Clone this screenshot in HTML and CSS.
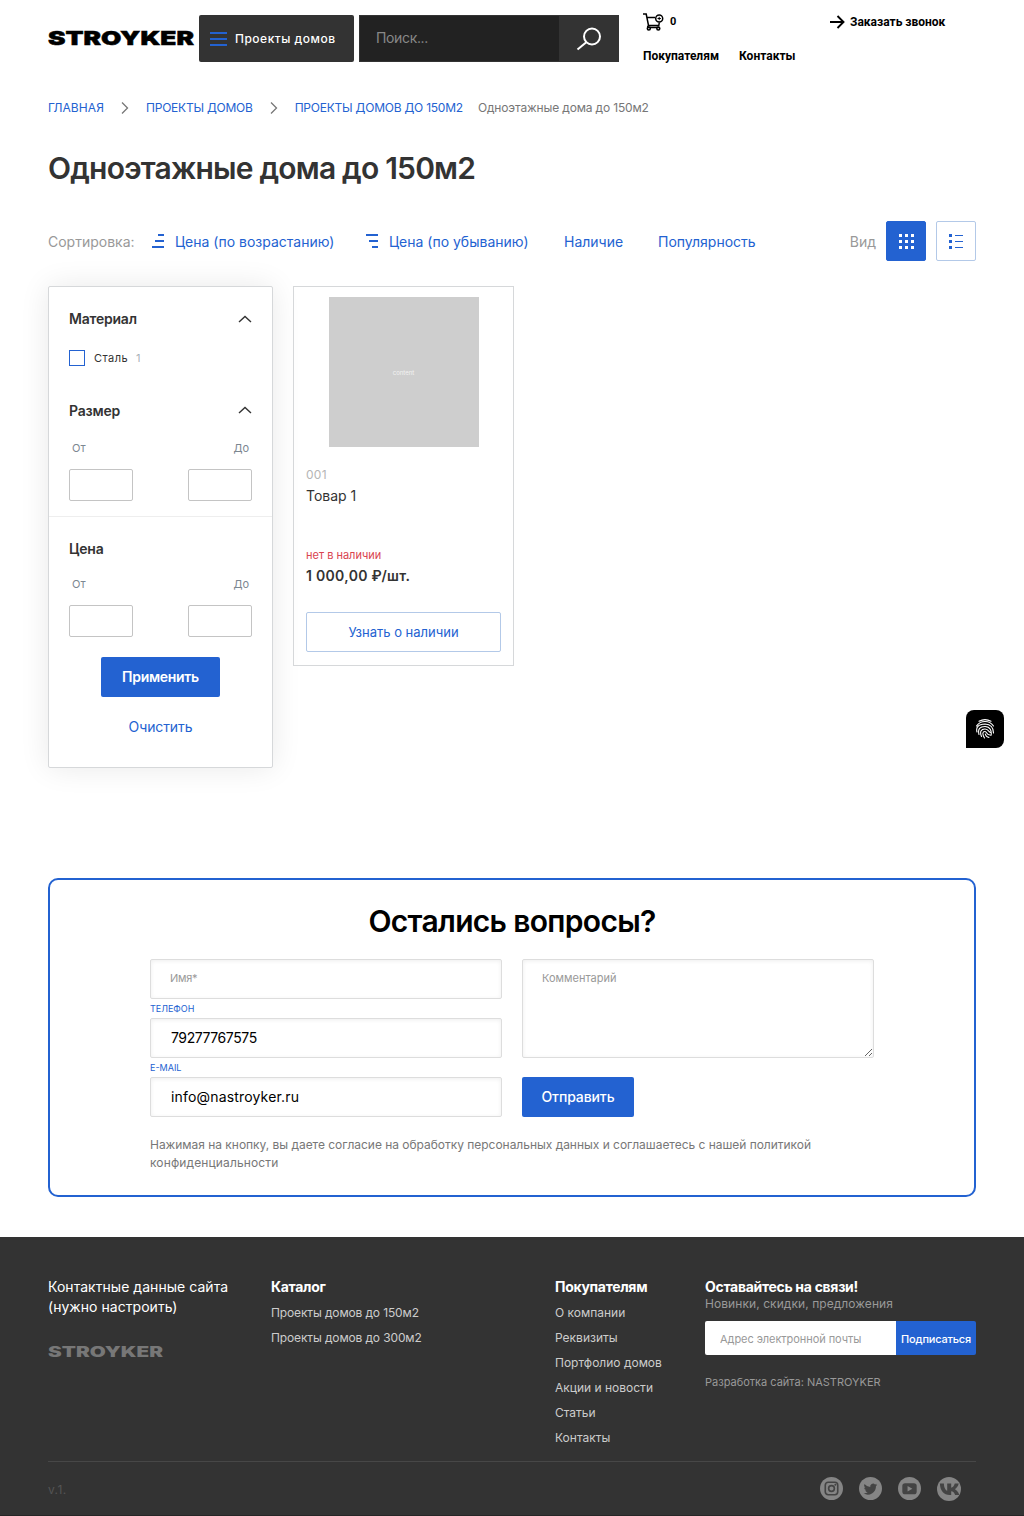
FILE: index.html
```html
<!DOCTYPE html>
<html lang="ru">
<head>
<meta charset="utf-8">
<title>Одноэтажные дома до 150м2</title>
<link rel="stylesheet" href="styles.css">
</head>
<body>
<header class="header">
  <a class="logo"><svg width="146" height="26" viewBox="0 0 146 26"><text x="0" y="19.500" textLength="146" lengthAdjust="spacingAndGlyphs">STROYKER</text></svg></a>
  <button class="menu-btn"><svg width="17" height="14" viewBox="0 0 17 14" stroke="#2362d1" stroke-width="2"><path d="M0 1h17M0 7h17M0 13h17"/></svg><span>Проекты домов</span></button>
  <div class="search"><input type="text" placeholder="Поиск..."><button class="search-btn"><svg width="26" height="24" viewBox="0 0 26 24" fill="none" stroke="#fff" stroke-width="2"><circle cx="16" cy="9.500" r="8"/><path d="M10.300 15.200L1.500 22.500"/></svg></button></div>
  <div class="top-nav">
    <div class="top-row">
      <a class="cart"><svg width="21" height="18" viewBox="0 0 21 18" fill="none" stroke="#000" stroke-width="1.500"><path d="M0 1h3.200L5.500 12.500H16.500M4 4.500H12M16.300 9.500L15.800 12.500M5.500 12.500Q3.800 14.300 5.500 14.500H16"/><circle cx="5.800" cy="15.500" r="1.500"/><circle cx="15.300" cy="15.500" r="1.500"/><circle cx="16.200" cy="5.500" r="3.500"/><path d="M16.200 3.800v3.400M14.500 5.500h3.400" stroke-width="1"/></svg><span>0</span></a>
      <a class="callback"><svg width="15" height="14" viewBox="0 0 15 14" fill="none" stroke="#000" stroke-width="1.900"><path d="M0 7h13.500M7.500 1l6 6-6 6"/></svg><span>Заказать звонок</span></a>
    </div>
    <nav class="top-links"><a>Покупателям</a><a>Контакты</a></nav>
  </div>
</header>
<main class="page">
  <nav class="crumbs">
    <a class="crumb-home">ГЛАВНАЯ</a><svg class="chev" width="8" height="12" viewBox="0 0 8 12"><path d="M1 .5L6.500 6 1 11.500"/></svg>
    <a>ПРОЕКТЫ ДОМОВ</a><svg class="chev" width="8" height="12" viewBox="0 0 8 12"><path d="M1 .5L6.500 6 1 11.500"/></svg>
    <a class="crumb-last">ПРОЕКТЫ ДОМОВ ДО 150М2</a><span>Одноэтажные дома до 150м2</span>
  </nav>
  <h1>Одноэтажные дома до 150м2</h1>
  <div class="sort">
    <span class="muted sort-label">Сортировка:</span>
    <a class="sort-asc"><svg width="12" height="14" viewBox="0 0 12 14"><path d="M6 1h6M3 7h9M0 13h12"/></svg><span>Цена (по возрастанию)</span></a>
    <a class="sort-desc"><svg width="12" height="14" viewBox="0 0 12 14"><path d="M0 1h12M3 7h9M6 13h6"/></svg><span>Цена (по убыванию)</span></a>
    <a class="sort-stock">Наличие</a>
    <a class="sort-pop">Популярность</a>
    <div class="view"><span class="muted">Вид</span>
      <button class="view-btn active"><svg width="15" height="15" viewBox="0 0 15 15" fill="#fff"><path d="M0 0h3v3H0zM6 0h3v3H6zM12 0h3v3h-3zM0 6h3v3H0zM6 6h3v3H6zM12 6h3v3h-3zM0 12h3v3H0zM6 12h3v3H6zM12 12h3v3h-3z"/></svg></button>
      <button class="view-btn"><svg width="15" height="15" viewBox="0 0 15 15" fill="#2362d1"><path d="M0 0h3v3H0zM0 6h3v3H0zM0 12h3v3H0zM6 1h8v1H6zM6 7h8v1H6zM6 13h8v1H6z"/></svg></button>
    </div>
  </div>
  <div class="catalog">
    <aside class="filter">
      <section class="filter-material">
        <h3><span>Материал</span><svg width="14" height="8" viewBox="0 0 14 8"><path d="M1 7l6-5.500L13 7"/></svg></h3>
        <label class="check"><span class="box"></span><span class="check-name">Сталь</span><i>1</i></label>
      </section>
      <section class="filter-size">
        <h3><span>Размер</span><svg width="14" height="8" viewBox="0 0 14 8"><path d="M1 7l6-5.500L13 7"/></svg></h3>
        <div class="range-labels"><span>От</span><span>До</span></div>
        <div class="range"><input type="text"><input type="text"></div>
      </section>
      <section class="filter-price">
        <h3><span>Цена</span></h3>
        <div class="range-labels"><span>От</span><span>До</span></div>
        <div class="range"><input type="text"><input type="text"></div>
        <button class="btn apply">Применить</button>
        <a class="clear">Очистить</a>
      </section>
    </aside>
    <article class="product">
      <div class="photo">content</div>
      <span class="sku">001</span>
      <a class="name">Товар 1</a>
      <span class="stock">нет в наличии</span>
      <b class="price">1 000,00 ₽/шт.</b>
      <button class="ask">Узнать о наличии</button>
    </article>
  </div>
  <section class="feedback">
    <h2>Остались вопросы?</h2>
    <form class="form">
      <div class="col">
        <input class="field ph name-field" type="text" placeholder="Имя*">
        <label>ТЕЛЕФОН</label>
        <input class="field phone" type="text" value="79277767575">
        <label>E-MAIL</label>
        <input class="field mail" type="text" value="info@nastroyker.ru">
      </div>
      <div class="col">
        <textarea class="field ph" placeholder="Комментарий"></textarea>
        <button type="button" class="btn send">Отправить</button>
      </div>
    </form>
    <p class="agree">Нажимая на кнопку, вы даете согласие на обработку персональных данных и соглашаетесь с нашей политикой<br><span>конфиденциальности</span></p>
  </section>
</main>
<footer class="footer">
  <div class="footer-cols">
    <div class="contacts"><p>Контактные данные сайта<br>(нужно настроить)</p>
      <svg width="115" height="20" viewBox="0 0 115 20"><text x="0" y="14.500" textLength="115" lengthAdjust="spacingAndGlyphs">STROYKER</text></svg></div>
    <div class="links"><h4>Каталог</h4><a class="tight">Проекты домов до 150м2</a><a class="tight">Проекты домов до 300м2</a></div>
    <div class="links"><h4>Покупателям</h4><a>О компании</a><a>Реквизиты</a><a>Портфолио домов</a><a>Акции и новости</a><a>Статьи</a><a>Контакты</a></div>
    <div class="subscribe"><h4>Оставайтесь на связи!</h4><p class="promo">Новинки, скидки, предложения</p>
      <div class="sub-form"><input type="text" placeholder="Адрес электронной почты"><button>Подписаться</button></div>
      <p class="dev">Разработка сайта: NASTROYKER</p></div>
  </div>
  <div class="footer-bottom"><span class="version">v.1.</span>
    <div class="social">
      <svg viewBox="0 0 24 24"><circle cx="12" cy="12" r="12"/><g class="cut"><rect x="5.500" y="5.500" width="13" height="13" rx="3"/><circle cx="12" cy="12" r="3"/></g><circle class="hole" cx="16" cy="8" r="1"/></svg>
      <svg viewBox="0 0 24 24"><circle cx="12" cy="12" r="12"/><path class="hole" d="M19 8.100a5.700 5.700 0 0 1-1.700.5 3 3 0 0 0 1.300-1.600 5.800 5.800 0 0 1-1.900.7A3 3 0 0 0 11.700 10.400 8.300 8.300 0 0 1 5.700 7.400a3 3 0 0 0 .9 3.900 3 3 0 0 1-1.300-.4 3 3 0 0 0 2.400 2.900 3 3 0 0 1-1.300.1 3 3 0 0 0 2.700 2A6 6 0 0 1 4.800 17a8.400 8.400 0 0 0 12.900-7.500A6 6 0 0 0 19 8.100z"/></svg>
      <svg viewBox="0 0 24 24"><circle cx="12" cy="12" r="12"/><rect class="hole" x="4.500" y="6.500" width="15" height="11.500" rx="3"/><path d="M10 9.500v5.500l5-2.750z"/></svg>
      <svg class="vk" viewBox="0 0 24 24"><circle cx="12" cy="12" r="12"/><path class="hole" d="M12.700 18C6.800 18 3.100 13.800 2.900 6.500h4c.1 5 2 6.800 3.300 7.300V6.500h4v4.300c1.500-.2 3-2.100 3.600-4.300h3.900c-.5 2.800-2.400 4.800-3.800 5.700 1.400.7 3.500 2.500 4.400 5.800h-4.200c-.7-2.200-2-3.500-3.900-3.700V18z"/></svg>
    </div>
  </div>
</footer>
<div class="finger"><svg width="20" height="22" viewBox="0 0 20 22"><path d="M4 3.200Q10 0 16 3.200M1.500 8Q4.500 3.500 10 3.500T18.500 8M2 14Q0 6.500 10 6Q18.500 6.500 18.500 15M4 16.500C2.500 11 5 8.500 10 8.500S17 13 16 17.500M6.500 18.500C4.500 14 6 11 10 11S14 15 16 14.500M9.500 20C7 16 7.500 13.500 10 13.500C12 13.500 11 17 15 17M10.300 16Q11 19 14 19.500"/></svg></div>
</body>
</html>
```
FILE: styles.css
```css
* { box-sizing: border-box; }
body { margin: 0; background: #fff; color: #333; font-family: Inter, "Noto Sans", sans-serif; font-size: 14px; }
a { color: #2362d1; text-decoration: none; }
button, input, textarea { font: inherit; margin: 0; padding: 0; outline: 0; border: 0; }
h1, h2, h3, h4, p { margin: 0; }
svg { display: block; flex: none; }

.header { display: flex; height: 95px; padding: 15px 48px 0; }
.logo { width: 151px; padding-top: 10px; }
.logo text { font-size: 19px; font-weight: 900; stroke: #000; stroke-width: .5; }
.logo svg, .contacts svg { overflow: visible; }
.menu-btn { display: flex; align-items: center; gap: 8px; width: 155px; height: 47px; margin-right: 5px; padding-left: 11px; border-radius: 2px; background: #333; color: #fff; font-size: 12px; font-weight: 500; letter-spacing: .5px; }
.search { display: flex; width: 260px; height: 47px; }
.search input { width: 200px; padding: 0 0 2px 16px; background: #222; border: 1px solid #333; border-right: 0; color: #fff; letter-spacing: -.35px; }
.search input::placeholder { color: #888; }
.search-btn { display: flex; align-items: center; justify-content: center; width: 60px; background: #333; }
.top-nav { flex: 1; padding-left: 24px; font-family: Roboto, sans-serif; font-size: 12px; font-weight: 700; color: #000; }
.top-nav a { color: #000; }
.top-row { display: flex; height: 14px; align-items: center; }
.cart { display: flex; width: 187px; gap: 6px; align-items: center; font-size: 11px; }
.cart span { margin-top: -2px; }
.callback { display: flex; gap: 5px; align-items: center; }
.top-links { display: flex; gap: 20px; margin-top: 20px; line-height: 14px; }

.page { padding: 0 48px; }
.crumbs { display: flex; align-items: center; height: 25px; font-size: 12px; letter-spacing: -.23px; color: #777; }
.crumb-home { letter-spacing: .1px; }
.chev { margin: 0 17px; fill: none; stroke: #777; stroke-width: 1.3; }
.crumb-last { margin-right: 15px; }
.crumbs span { letter-spacing: -.15px; }
h1 { margin-top: 29px; font-size: 30px; line-height: 38px; font-weight: 600; letter-spacing: -.8px; }
.sort { display: flex; align-items: center; height: 40px; margin-top: 34px; }
.muted { color: #999; }
.sort svg path { stroke: #2362d1; stroke-width: 2; }
.sort .view path { stroke: none; }
.sort-asc, .sort-desc { display: flex; align-items: center; gap: 11px; }
.sort-label { width: 104px; }
.sort-asc { width: 214px; }
.sort-desc { width: 198px; }
.sort-stock { width: 94px; }
.view { display: flex; align-items: center; gap: 10px; margin-left: auto; }
.view-btn { display: flex; align-items: center; justify-content: center; width: 40px; height: 40px; border: 1px solid #b3c9e8; border-radius: 2px; background: #fff; }
.view-btn.active { background: #2362d1; border-color: #2362d1; }

.catalog { display: flex; align-items: flex-start; gap: 20px; height: 617px; padding-top: 25px; }
.filter { width: 225px; height: 482px; border: 1px solid #d6d8da; border-radius: 2px; background: #fff; box-shadow: 0 0 30px rgba(0,0,0,.09); }
.filter section { padding: 0 20px; }
.filter h3 { display: flex; justify-content: space-between; align-items: center; height: 20px; font-size: 14px; font-weight: 600; letter-spacing: -.22px; }
.filter h3 path { fill: none; stroke: #333; stroke-width: 1.4; }
.filter .filter-material { height: 113px; padding-top: 22px; }
.filter-material h3 span { margin-top: -1px; }
.check { display: flex; align-items: center; height: 16px; margin-top: 21px; font-size: 11px; }
.check .box { width: 16px; height: 16px; border: 1px solid #2362d1; margin-right: 9px; }
.check-name { letter-spacing: .45px; }
.check i { margin-left: 8px; font-style: normal; color: #a9b1b8; }
.filter .filter-size { height: 117px; border-bottom: 1px solid #eee; }
.range-labels { display: flex; justify-content: space-between; height: 16px; margin-top: 20px; padding: 0 3px; font-size: 11px; line-height: 16px; color: #7c8791; }
.range { display: flex; justify-content: space-between; margin-top: 13px; }
.range input { width: 64px; height: 32px; border: 1px solid #c4c4c4; border-radius: 2px; }
.filter .filter-price { display: flex; flex-direction: column; padding-top: 21px; }
.filter-price .range-labels { margin-top: 18px; }
.btn { height: 40px; border-radius: 2px; background: #2362d1; color: #fff; font-weight: 600; }
.apply { width: 119px; margin: 20px auto 0; padding-bottom: 1px; align-self: center; letter-spacing: -.3px; }
.clear { align-self: center; margin-top: 20px; line-height: 20px; letter-spacing: -.1px; }

.product { display: flex; flex-direction: column; width: 221px; height: 380px; padding: 10px 12px; border: 1px solid #d6d8da; }
.photo { display: flex; align-items: center; justify-content: center; align-self: center; width: 150px; height: 150px; background: #cecece; color: #f2f2f2; font-size: 6px; }
.sku { margin-top: 20px; font-size: 12px; line-height: 16px; letter-spacing: .3px; color: #b5b5b5; }
.name { margin-top: 3px; line-height: 20px; color: #333; }
.stock { margin-top: 41px; font-size: 11px; line-height: 16px; color: #d9444f; }
.price { margin-top: 3px; font-size: 14px; line-height: 20px; font-weight: 600; letter-spacing: .3px; }
.ask { height: 40px; margin-top: 26px; border: 1px solid #b3c9e8; border-radius: 2px; background: #fff; color: #2362d1; font-size: 13px; }

.feedback { height: 319px; padding: 23px 100px 0; border: 2px solid #2362d1; border-radius: 10px; }
h2 { text-align: center; font-size: 30px; line-height: 36px; font-weight: 600; letter-spacing: -.68px; color: #000; }
.form { display: flex; gap: 20px; margin-top: 20px; }
.col { display: flex; flex-direction: column; width: 352px; }
.field { height: 40px; padding: 0 20px 1px; border: 1px solid #ddd; border-radius: 2px; background: #fff; color: #000; box-shadow: inset 0 1px 4px rgba(0,0,0,.07); }
.ph { font-size: 11px; padding: 0 19px 2px; }
.ph::placeholder { color: #999; }
.name-field { letter-spacing: -.3px; }
.phone { letter-spacing: -.42px; }
.mail { letter-spacing: .17px; }
.col label { height: 19px; font-size: 9px; line-height: 19px; color: #2362d1; }
textarea.field { height: 99px; padding: 11px 19px; }
.send { align-self: flex-start; width: 112px; margin-top: 19px; padding-bottom: 1px; font-weight: 500; letter-spacing: -.1px; }
.agree { margin-top: 19px; font-size: 12px; line-height: 18px; letter-spacing: -.03px; color: #777; white-space: nowrap; }
.agree span { letter-spacing: .13px; }

.footer { height: 279px; margin-top: 40px; padding: 40px 48px 0; background: #333; color: #fff; border-bottom: 1px solid #262626; }
.footer-cols { display: grid; grid-template-columns: 223px 284px 150px 271px; height: 184px; }
.contacts p { line-height: 20px; white-space: nowrap; letter-spacing: .04px; }
.contacts svg { margin-top: 25px; }
.contacts text { font-size: 14px; font-weight: 900; fill: #777; }
.links { display: flex; flex-direction: column; }
h4 { font-size: 14px; line-height: 19px; height: 20px; font-weight: 700; letter-spacing: -.3px; }
.links h4 { margin-bottom: 3px; }
.links a { font-size: 12px; line-height: 25px; color: #ccc; }
.links .tight { letter-spacing: -.13px; }
.promo { font-size: 12px; line-height: 14px; letter-spacing: .07px; color: #999; }
.sub-form { display: flex; height: 34px; margin-top: 10px; }
.sub-form input { width: 191px; padding: 2px 15px 0; border-radius: 2px 0 0 2px; background: #fff; font-size: 11px; letter-spacing: -.06px; }
.sub-form input::placeholder { color: #999; }
.sub-form button { width: 80px; padding-top: 2px; border-radius: 0 2px 2px 0; background: #2362d1; color: #fff; font-size: 11px; font-weight: 500; letter-spacing: -.2px; }
.dev { margin-top: 19px; font-size: 11px; line-height: 16px; color: #999; }
.footer-bottom { display: flex; justify-content: space-between; align-items: center; height: 54px; padding-right: 15px; border-top: 1px solid #474747; }
.version { padding-top: 2px; font-size: 12px; letter-spacing: .4px; color: #555; }
.social { display: flex; align-items: center; gap: 16px; }
.social svg { width: 23px; height: 23px; fill: #858585; }
.social .vk { width: 24px; height: 24px; }
.social .hole { fill: #444; }
.social .cut { fill: none; stroke: #444; stroke-width: 1.7; }
.finger { position: fixed; left: 966px; top: 710px; display: flex; align-items: center; justify-content: center; width: 38px; height: 38px; border-radius: 8px 8px 8px 0; background: #000; }
.finger path { fill: none; stroke: #fff; stroke-width: 1.1; stroke-linecap: round; }
```
